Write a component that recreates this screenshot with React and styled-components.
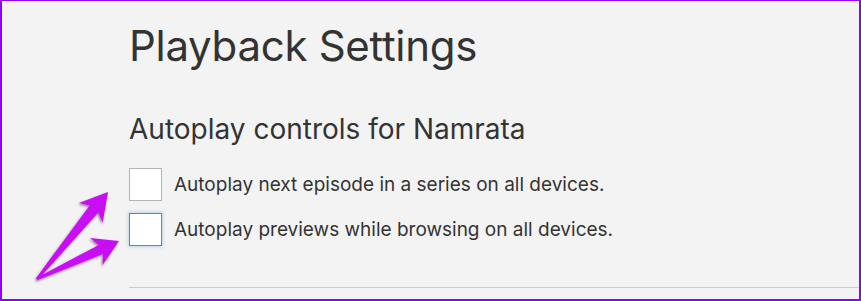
import React from 'react';
import styled, { createGlobalStyle } from 'styled-components';

const GlobalStyle = createGlobalStyle`
    html, body {
        margin: 0;
        padding: 0;
        background: #f3f3f3;
    }
    * {
        box-sizing: border-box;
    }
`;

const options = [
    { label: 'Autoplay next episode in a series on all devices.', focused: false },
    { label: 'Autoplay previews while browsing on all devices.', focused: true },
];

function App() {
    return (
        <>
            <GlobalStyle />
            <Frame>
                <Content>
                    <Title>Playback Settings</Title>
                    <Subtitle>Autoplay controls for Namrata</Subtitle>
                    <Options>
                        {options.map((o) => (
                            <Row key={o.label}>
                                <Box focused={o.focused} />
                                <Label>{o.label}</Label>
                            </Row>
                        ))}
                    </Options>
                    <Divider />
                </Content>
                <Arrows viewBox="0 0 861 301" width="861" height="301">
                    <defs>
                        <filter id="shade" x="-20%" y="-20%" width="140%" height="140%">
                            <feDropShadow dx="-1" dy="1.5" stdDeviation="1" floodColor="#3a2a40" floodOpacity="0.55" />
                        </filter>
                    </defs>
                    <g fill="#c90df5" filter="url(#shade)">
                        <polygon points="38,279.8 98.3,212.6 102.7,222.7 108,192 78.9,202.9 89.7,205.4 36,278.2" />
                        <polygon points="37.8,280 103,253.9 102.6,265.1 119,241 90,237.9 98.8,244.9 36.2,278" />
                    </g>
                </Arrows>
            </Frame>
        </>
    );
}

export default App;

const Frame = styled.div`
    position: relative;
    width: 861px;
    height: 301px;
    border: 2px solid #9000ff;
    border-top-width: 1px;
    background: #f3f3f3;
    overflow: hidden;
    font-family: Inter, "Noto Sans", sans-serif;
    color: #333;
`;

const Content = styled.div`
    padding: 17px 0 0 127px;
    display: flex;
    flex-direction: column;
`;

const Title = styled.h1`
    margin: 0;
    font-size: 42px;
    font-weight: 400;
    line-height: 56px;
    letter-spacing: -0.3px;
`;

const Subtitle = styled.h2`
    margin: 38px 0 0;
    font-size: 28px;
    font-weight: 400;
    line-height: 34px;
`;

const Options = styled.div`
    margin-top: 22px;
    display: flex;
    flex-direction: column;
    gap: 12px;
`;

const Row = styled.label`
    display: flex;
    align-items: center;
    gap: 12px;
`;

const Box = styled.span`
    width: 33px;
    height: 33px;
    flex: none;
    background: #fff;
    border: 1px solid ${(p) => (p.focused ? '#808080' : '#b3b3b3')};
    box-shadow: ${(p) => (p.focused ? '0 0 3px 1px rgba(120, 170, 240, 0.45)' : 'none')};
`;

const Label = styled.span`
    font-size: 19px;
    line-height: 24px;
`;

const Divider = styled.div`
    margin-top: 41px;
    height: 1px;
    background: #cccccc;
`;

const Arrows = styled.svg`
    position: absolute;
    left: -2px;
    top: -1px;
    pointer-events: none;
`;
